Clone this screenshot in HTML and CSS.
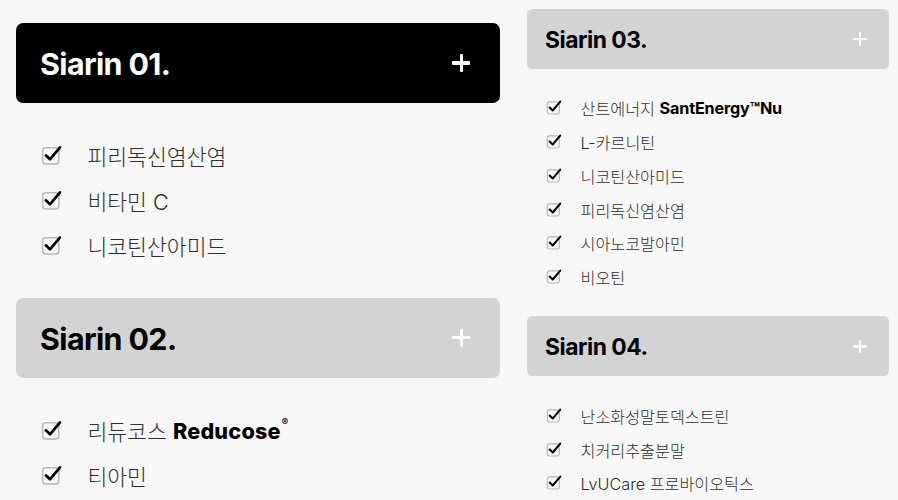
FILE: index.html
```html
<!DOCTYPE html>
<html lang="ko">

<head>
  <meta charset="UTF-8" />
  <meta name="viewport" content="width=device-width, initial-scale=1.0" />
  <title>Siarin</title>
  <link rel="stylesheet" href="styles.css">
</head>

<body>

  <div class="page">

    <!-- 왼쪽 (큰 화면) -->
    <div class="col col-big">
      <div class="group">
        <div class="head active">
          <span class="head-title">Siarin 01.</span>
          <span class="plus"></span>
        </div>
        <ul class="items">
          <li><svg class="chk" viewBox="0 0 20 20"><rect x="1.5" y="3.5" width="15" height="15" rx="3"/><path d="M4.5 10.5 L8.3 14.2 L17.6 3.2"/></svg>피리독신염산염</li>
          <li><svg class="chk" viewBox="0 0 20 20"><rect x="1.5" y="3.5" width="15" height="15" rx="3"/><path d="M4.5 10.5 L8.3 14.2 L17.6 3.2"/></svg>비타민 C</li>
          <li><svg class="chk" viewBox="0 0 20 20"><rect x="1.5" y="3.5" width="15" height="15" rx="3"/><path d="M4.5 10.5 L8.3 14.2 L17.6 3.2"/></svg>니코틴산아미드</li>
        </ul>
      </div>

      <div class="group">
        <div class="head">
          <span class="head-title">Siarin 02.</span>
          <span class="plus"></span>
        </div>
        <ul class="items">
          <li><svg class="chk" viewBox="0 0 20 20"><rect x="1.5" y="3.5" width="15" height="15" rx="3"/><path d="M4.5 10.5 L8.3 14.2 L17.6 3.2"/></svg>리듀코스&nbsp;<b class="brand">Reducose<sup>®</sup></b></li>
          <li><svg class="chk" viewBox="0 0 20 20"><rect x="1.5" y="3.5" width="15" height="15" rx="3"/><path d="M4.5 10.5 L8.3 14.2 L17.6 3.2"/></svg>티아민</li>
        </ul>
      </div>
    </div>

    <!-- 오른쪽 (작은 화면) -->
    <div class="col col-small">
      <div class="group">
        <div class="head">
          <span class="head-title">Siarin 03.</span>
          <span class="plus"></span>
        </div>
        <ul class="items">
          <li><svg class="chk" viewBox="0 0 20 20"><rect x="1.5" y="3.5" width="15" height="15" rx="3"/><path d="M4.5 10.5 L8.3 14.2 L17.6 3.2"/></svg>산트에너지&nbsp;<b>SantEnergy™Nu</b></li>
          <li><svg class="chk" viewBox="0 0 20 20"><rect x="1.5" y="3.5" width="15" height="15" rx="3"/><path d="M4.5 10.5 L8.3 14.2 L17.6 3.2"/></svg>L-카르니틴</li>
          <li><svg class="chk" viewBox="0 0 20 20"><rect x="1.5" y="3.5" width="15" height="15" rx="3"/><path d="M4.5 10.5 L8.3 14.2 L17.6 3.2"/></svg>니코틴산아미드</li>
          <li><svg class="chk" viewBox="0 0 20 20"><rect x="1.5" y="3.5" width="15" height="15" rx="3"/><path d="M4.5 10.5 L8.3 14.2 L17.6 3.2"/></svg>피리독신염산염</li>
          <li><svg class="chk" viewBox="0 0 20 20"><rect x="1.5" y="3.5" width="15" height="15" rx="3"/><path d="M4.5 10.5 L8.3 14.2 L17.6 3.2"/></svg>시아노코발아민</li>
          <li><svg class="chk" viewBox="0 0 20 20"><rect x="1.5" y="3.5" width="15" height="15" rx="3"/><path d="M4.5 10.5 L8.3 14.2 L17.6 3.2"/></svg>비오틴</li>
        </ul>
      </div>

      <div class="group">
        <div class="head">
          <span class="head-title">Siarin 04.</span>
          <span class="plus"></span>
        </div>
        <ul class="items">
          <li><svg class="chk" viewBox="0 0 20 20"><rect x="1.5" y="3.5" width="15" height="15" rx="3"/><path d="M4.5 10.5 L8.3 14.2 L17.6 3.2"/></svg>난소화성말토덱스트린</li>
          <li><svg class="chk" viewBox="0 0 20 20"><rect x="1.5" y="3.5" width="15" height="15" rx="3"/><path d="M4.5 10.5 L8.3 14.2 L17.6 3.2"/></svg>치커리추출분말</li>
          <li><svg class="chk" viewBox="0 0 20 20"><rect x="1.5" y="3.5" width="15" height="15" rx="3"/><path d="M4.5 10.5 L8.3 14.2 L17.6 3.2"/></svg>LvUCare 프로바이오틱스</li>
        </ul>
      </div>
    </div>

  </div>

</body>

</html>
```

FILE: styles.css
```css
* {
  box-sizing: border-box;
}

html,
body {
  margin: 0;
  padding: 0;
  background: #f7f7f7;
  font-family: Inter, 'Noto Sans CJK KR', sans-serif;
  height: 100%;
  overflow: hidden;
}

.page {
  display: flex;
  align-items: flex-start;
}

/* 두 칼럼은 같은 구조, 크기만 다름 (em 기준) */
.col {
  display: flex;
  flex-direction: column;
}

.col-big {
  font-size: 16px;
  width: 484px;
  margin-left: 16px;
  padding-top: 23px;
}

.col-small {
  font-size: 12px;
  width: 362px;
  margin-left: 27px;
  padding-top: 9px;
}

.head {
  height: 5em;
  background: #d3d3d3;
  border-radius: 0.45em;
  display: flex;
  align-items: center;
  justify-content: space-between;
  padding: 0 1.85em 0 1.5em;
  color: #000;
}

.head.active {
  background: #000;
  color: #fff;
}

.head-title {
  font-size: 1.9em;
  font-weight: 700;
  letter-spacing: -0.02em;
  padding-top: 0.05em;
}

.plus {
  position: relative;
  width: 1.15em;
  height: 1.15em;
}

.plus::before,
.plus::after {
  content: '';
  position: absolute;
  background: #fff;
  border-radius: 1px;
}

.plus::before {
  left: 0;
  right: 0;
  top: 50%;
  height: 0.19em;
  margin-top: -0.095em;
}

.plus::after {
  top: 0;
  bottom: 0;
  left: 50%;
  width: 0.19em;
  margin-left: -0.095em;
}

.items {
  list-style: none;
  margin: 0;
  padding: 1.875em 0 1.875em 1.56em;
}

/* li 폰트 21.6px 기준: 높이 45px */
.items li {
  font-size: 1.35em;
  font-weight: 300;
  height: 2.083em;
  display: flex;
  align-items: center;
  color: #2e2e2e;
}

.items b {
  font-weight: 700;
  color: #000;
  letter-spacing: -0.01em;
}

.items b.brand {
  font-weight: 800;
  letter-spacing: 0.01em;
}

.items sup {
  font-size: 0.45em;
  vertical-align: 1.3em;
  margin-left: 1px;
}

.chk {
  flex: none;
  width: 1em;
  height: 1em;
  margin-right: 1.15em;
  margin-top: -0.1em;
  overflow: visible;
}

.chk rect {
  fill: none;
  stroke: #b8b8b8;
  stroke-width: 1.4;
}

.chk path {
  fill: none;
  stroke: #000;
  stroke-width: 2.5;
  stroke-linecap: round;
  stroke-linejoin: round;
}
```
